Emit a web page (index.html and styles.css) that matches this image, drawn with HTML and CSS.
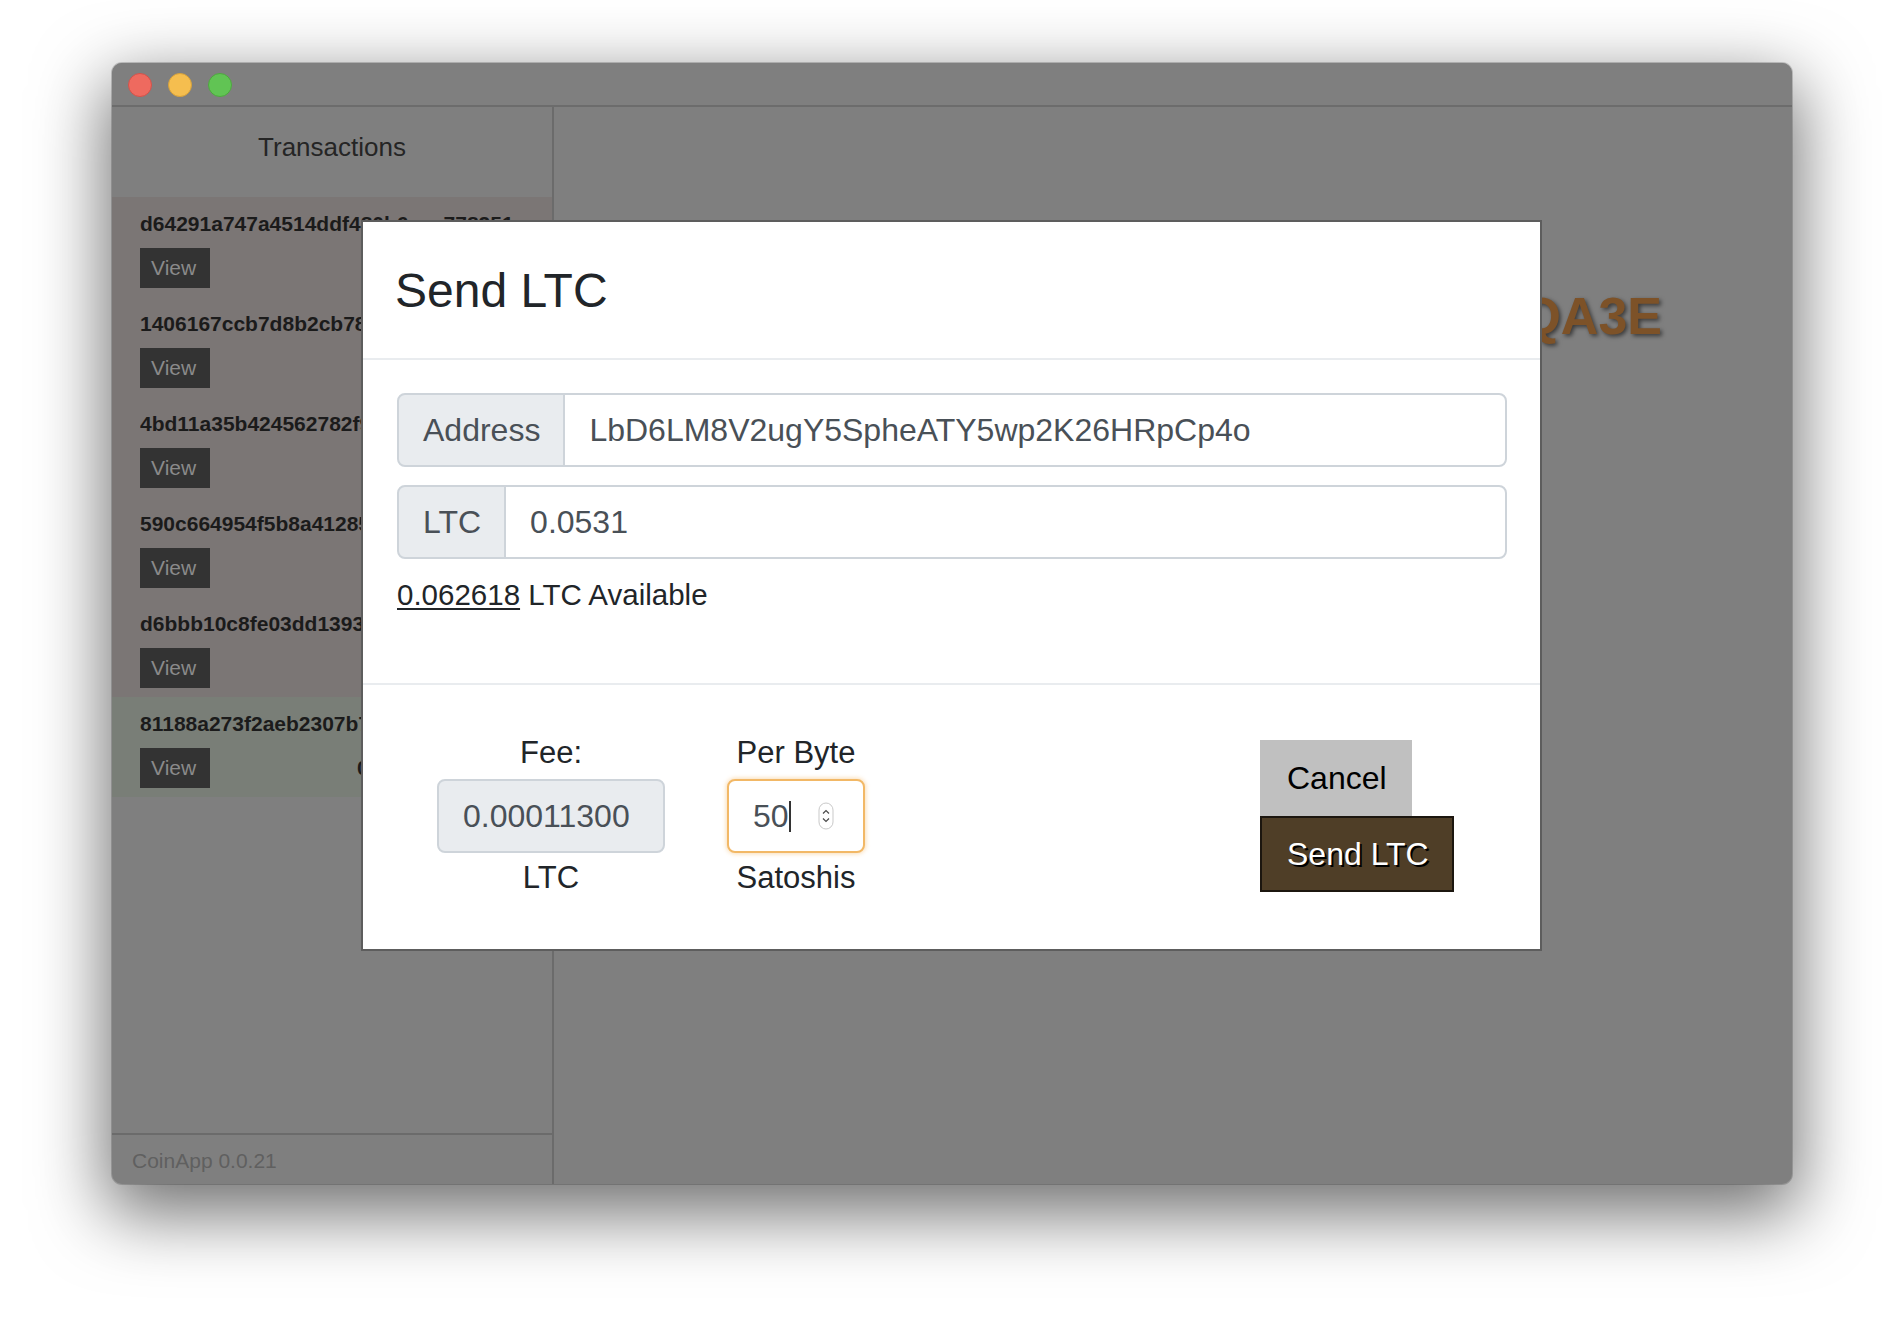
FILE: index.html
```html
<!DOCTYPE html>
<html lang="en">
<head>
<meta charset="utf-8">
<title>CoinApp</title>
<link rel="stylesheet" href="styles.css">
</head>
<body>
<div class="window">
  <div class="titlebar">
    <span class="light red"></span>
    <span class="light yellow"></span>
    <span class="light green"></span>
  </div>
  <div class="app">
    <aside class="sidebar">
      <div class="side-head">Transactions</div>
      <ul class="tx-list">
        <li class="tx">
          <div class="tx-hash">d64291a747a4514ddf480b6aaa778351</div>
          <div class="tx-row"><span class="view">View</span></div>
        </li>
        <li class="tx">
          <div class="tx-hash">1406167ccb7d8b2cb78e1f04a9d3c25b</div>
          <div class="tx-row"><span class="view">View</span></div>
        </li>
        <li class="tx">
          <div class="tx-hash">4bd11a35b424562782f9c0e7d13a86b4</div>
          <div class="tx-row"><span class="view">View</span></div>
        </li>
        <li class="tx">
          <div class="tx-hash">590c664954f5b8a41285e2d7b0c93f61</div>
          <div class="tx-row"><span class="view">View</span></div>
        </li>
        <li class="tx">
          <div class="tx-hash">d6bbb10c8fe03dd13934a7e5f28c6b09</div>
          <div class="tx-row"><span class="view">View</span></div>
        </li>
        <li class="tx tx-in">
          <div class="tx-hash">81188a273f2aeb2307b7d4c1e9a5f032</div>
          <div class="tx-row"><span class="view">View</span><span class="tx-amount">0.0626</span></div>
        </li>
      </ul>
      <div class="side-foot">CoinApp 0.0.21</div>
    </aside>
    <main class="main">
      <h1 class="my-address">LZx7q9RbN4mT2kWcH8vYpD3sF6jG1QA3E</h1>
    </main>
  </div>

  <div class="modal">
    <div class="modal-header">
      <h2 class="modal-title">Send LTC</h2>
    </div>
    <div class="modal-body">
      <div class="input-group">
        <span class="prepend">Address</span>
        <input class="field" type="text" value="LbD6LM8V2ugY5SpheATY5wp2K26HRpCp4o">
      </div>
      <div class="input-group gap">
        <span class="prepend">LTC</span>
        <input class="field" type="text" value="0.0531">
      </div>
      <p class="available"><span class="amt">0.062618</span> LTC Available</p>
    </div>
    <div class="modal-footer">
      <div class="fee-col">
        <div class="lbl">Fee:</div>
        <div class="box readonly">0.00011300</div>
        <div class="lbl unit">LTC</div>
      </div>
      <div class="fee-col perbyte">
        <div class="lbl">Per Byte</div>
        <div class="box focus">
          <span class="val">50</span><span class="caret"></span>
          <svg class="spin" width="16" height="28" viewBox="0 0 16 28">
            <rect x="1" y="1" width="14" height="26" rx="7" fill="#fff" stroke="#c9c9c9"/>
            <path d="M5 11.5 L8 8.5 L11 11.5" fill="none" stroke="#4a4a4a" stroke-width="1.2"/>
            <path d="M5 16.5 L8 19.5 L11 16.5" fill="none" stroke="#4a4a4a" stroke-width="1.2"/>
          </svg>
        </div>
        <div class="lbl unit">Satoshis</div>
      </div>
      <div class="actions">
        <button class="btn cancel">Cancel</button>
        <button class="btn send">Send LTC</button>
      </div>
    </div>
  </div>
</div>
</body>
</html>
```

FILE: styles.css
```css
html, body {
  margin: 0;
  padding: 0;
  background: #ffffff;
}

body {
  font-family: "Liberation Sans", Arial, sans-serif;
  color: #212529;
  height: 1344px;
  box-sizing: border-box;
  padding-top: 63px;
  overflow: hidden;
}

.window {
  position: relative;
  margin: 0 0 0 112px;
  width: 1680px;
  height: 1121px;
  border-radius: 10px;
  background: #7f7f7f;
  box-shadow: 0 24px 70px 6px rgba(0, 0, 0, 0.56), 0 0 0 1px rgba(0, 0, 0, 0.18);
  display: flex;
  flex-direction: column;
  overflow: hidden;
}

.titlebar {
  border-bottom: 2px solid #6c6c6c;
  background: #7f7f7f;
  display: flex;
  align-items: center;
  gap: 16px;
  padding: 2px 0 0 16px;
  box-sizing: border-box;
  height: 44px;
  flex: none;
}

.light {
  width: 24px;
  height: 24px;
  border-radius: 50%;
  box-sizing: border-box;
}
.light.red { background: #ee6a5f; border: 1px solid #d2524b; }
.light.yellow { background: #f5be4f; border: 1px solid #d6a13a; }
.light.green { background: #61c454; border: 1px solid #4ea73f; }

.app {
  flex: 1;
  display: flex;
  min-height: 0;
}

.sidebar {
  width: 440px;
  border-right: 2px solid #6b6b6b;
  display: flex;
  flex-direction: column;
  flex: none;
}

.side-head {
  height: 90px;
  box-sizing: border-box;
  padding-top: 22px;
  text-align: center;
  font-size: 26px;
  line-height: 36px;
  color: #252525;
  background: #7f7f7f;
}

.tx-list {
  list-style: none;
  margin: 0;
  padding: 0;
  flex: 1;
}

.tx {
  height: 100px;
  box-sizing: border-box;
  padding: 12px 28px 0 28px;
  background: #7b7675;
}

.tx.tx-in {
  background: #797e77;
}

.tx-hash {
  font-size: 21px;
  font-weight: bold;
  line-height: 30px;
  color: #1b1b1b;
  white-space: nowrap;
  overflow: hidden;
}

.tx-row {
  margin-top: 9px;
  display: flex;
  align-items: center;
}

.view {
  display: inline-block;
  width: 70px;
  height: 40px;
  box-sizing: border-box;
  padding-left: 11px;
  background: #333333;
  color: #8a8a8a;
  font-size: 21px;
  line-height: 40px;
}

.tx-amount {
  margin-left: 147px;
  font-size: 21px;
  font-weight: bold;
  color: #1b1b1b;
}

.side-foot {
  height: 51px;
  box-sizing: border-box;
  border-top: 2px solid #6b6b6b;
  padding: 11px 0 0 20px;
  font-size: 21px;
  line-height: 30px;
  color: #606060;
}

.main {
  flex: 1;
  padding-top: 178px;
}

.my-address {
  margin: 0;
  padding-right: 130px;
  text-align: right;
  font-size: 52px;
  line-height: 63px;
  font-weight: bold;
  color: #7d5228;
  text-shadow: 2px 2px 4px rgba(0, 0, 0, 0.55);
  white-space: nowrap;
}

/* modal */
.modal {
  position: absolute;
  left: 249px;
  top: 157px;
  width: 1177px;
  background: #ffffff;
  border: 2px solid #5d5d5d;
}

.modal-header {
  padding: 41px 32px 40px 32px;
  border-bottom: 2px solid #e9ecef;
}

.modal-title {
  margin: 0;
  font-size: 48px;
  line-height: 55px;
  font-weight: normal;
  color: #212529;
}

.modal-body {
  padding: 33px 33px 66px 34px;
  border-bottom: 2px solid #e9ecef;
}

.input-group {
  display: flex;
  height: 74px;
}

.input-group.gap {
  margin-top: 18px;
}

.prepend {
  flex: none;
  box-sizing: border-box;
  padding: 0 23px 0 24px;
  background: #e9ecef;
  border: 2px solid #ced4da;
  border-radius: 8px 0 0 8px;
  font-size: 32px;
  line-height: 70px;
  color: #495057;
}

.field {
  flex: 1;
  min-width: 0;
  margin: 0;
  margin-left: -2px;
  box-sizing: border-box;
  height: 74px;
  padding: 0 24px;
  border: 2px solid #ced4da;
  border-radius: 0 8px 8px 0;
  font-family: "Liberation Sans", Arial, sans-serif;
  font-size: 32px;
  color: #495057;
  background: #ffffff;
  outline: none;
}

.available {
  margin: 14px 0 0 0;
  font-size: 29.5px;
  line-height: 44px;
  color: #212529;
}

.amt {
  text-decoration: underline;
  text-decoration-thickness: 2px;
  text-underline-offset: 3px;
}

.modal-footer {
  height: 264px;
  box-sizing: border-box;
  padding: 50px 0 0 74px;
  display: flex;
  align-items: flex-start;
}

.fee-col {
  width: 228px;
  display: flex;
  flex-direction: column;
  align-items: center;
}

.fee-col.perbyte {
  width: 138px;
  margin-left: 62px;
}

.lbl {
  font-size: 31px;
  line-height: 36px;
  color: #212529;
  white-space: nowrap;
}

.lbl.unit {
  margin-top: 7px;
}

.box {
  margin-top: 8px;
  width: 100%;
  height: 74px;
  box-sizing: border-box;
  border-radius: 8px;
  font-size: 32px;
  color: #495057;
  display: flex;
  align-items: center;
}

.box.readonly {
  background: #e9ecef;
  border: 2px solid #ced4da;
  padding-left: 24px;
}

.box.focus {
  background: #ffffff;
  border: 2px solid #f2b866;
  box-shadow: 0 0 4px 1px rgba(245, 180, 90, 0.45);
  padding: 0 29px 0 24px;
}

.caret {
  width: 2px;
  height: 31px;
  background: #333333;
}

.spin {
  margin-left: auto;
  flex: none;
}

.actions {
  margin-left: 395px;
  margin-top: 5px;
  display: flex;
  flex-direction: column;
  align-items: flex-start;
}

.btn {
  margin: 0;
  border: none;
  border-radius: 0;
  font-family: "Liberation Sans", Arial, sans-serif;
  font-size: 32px;
  text-align: left;
  cursor: pointer;
}

.btn.cancel {
  width: 152px;
  height: 76px;
  padding: 0 0 0 27px;
  background: #c0c0c0;
  color: #000000;
}

.btn.send {
  width: 194px;
  height: 76px;
  padding: 0 0 0 25px;
  background: #4f3e27;
  border: 2px solid #1c160f;
  color: #ffffff;
  text-shadow: 2px 2px 0 #000000;
}
```
